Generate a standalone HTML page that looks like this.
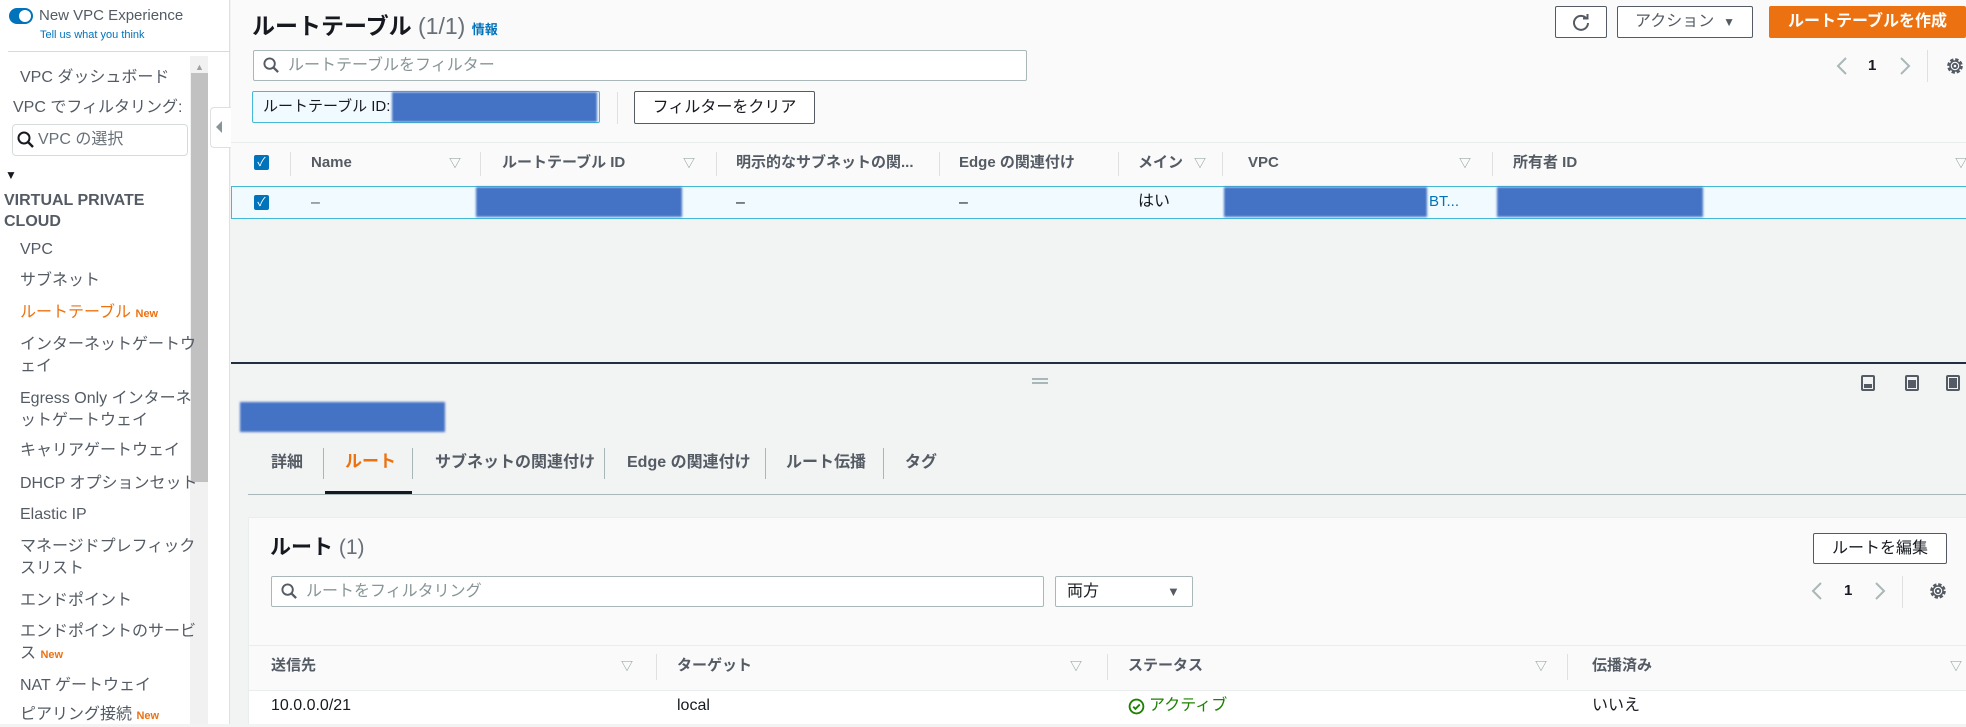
<!DOCTYPE html>
<html><head><meta charset="utf-8">
<style>
*{box-sizing:border-box;margin:0;padding:0}
body{width:1966px;height:724px;overflow:hidden;background:#f2f3f3;font-family:"Liberation Sans","Noto Sans CJK JP",sans-serif;font-size:16px;color:#16191f;position:relative}
.a{position:absolute;white-space:nowrap;line-height:22px}
.side{position:absolute;left:0;top:0;width:230px;height:724px;background:#fff;border-right:1px solid #e0e0e0}
.si{position:absolute;left:20px;color:#545b64;font-size:16px;line-height:22px;white-space:nowrap}
.blue{background:#4472c4;filter:blur(1px);position:absolute}
.btn{position:absolute;border:1px solid #545b64;border-radius:2px;background:#fff;font-size:16px;color:#16191f;display:flex;align-items:center;justify-content:center;line-height:20px}
.hd{font-weight:bold;color:#545b64;font-size:15px}
.tri{color:#879596;font-size:12px}
.sep{position:absolute;width:1px;background:#e0e0e0}
.inp{position:absolute;border:1px solid #aab7b8;background:#fff;border-radius:2px}
.ph{color:#879596}
</style></head><body>
<div class="side">
  <div class="a" style="left:9px;top:8px;width:24px;height:16px;border-radius:8px;background:#0073bb"></div>
  <div class="a" style="left:19px;top:10px;width:12px;height:12px;border-radius:6px;background:#fff"></div>
  <div class="a" style="left:39px;top:5px;font-size:15px;color:#545b64">New VPC Experience</div>
  <div class="a" style="left:40px;top:24px;font-size:11px;color:#0073bb">Tell us what you think</div>
  <div class="a" style="left:8px;top:51px;width:222px;height:1px;background:#d5dbdb"></div>
  <div class="a" style="left:190px;top:56px;width:18px;height:668px;background:#f1f1f1"></div>
  <div class="a" style="left:191px;top:73px;width:17px;height:409px;background:#c1c1c1"></div>
  <div class="a" style="left:195px;top:56px;font-size:9px;color:#a0a0a0">▲</div>
  <div class="si" style="top:67px">VPC ダッシュボード</div>
  <div class="si" style="top:97px;left:13px">VPC でフィルタリング:</div>
  <div class="inp" style="left:12px;top:124px;width:176px;height:32px;border-color:#d5dbdb;border-radius:4px"></div>
  <svg class="a" style="left:17px;top:131px" width="18" height="18" viewBox="0 0 18 18"><circle cx="7" cy="7" r="5.5" fill="none" stroke="#16191f" stroke-width="2"/><path d="M11 11l5 5" stroke="#16191f" stroke-width="2.4"/></svg>
  <div class="si" style="top:129px;left:38px;color:#687078">VPC の選択</div>
  <div class="a" style="left:5px;top:164px;font-size:12px;color:#16191f">▼</div>
  <div class="a" style="left:4px;top:190px;font-size:16px;font-weight:bold;color:#545b64;line-height:21px">VIRTUAL PRIVATE<br>CLOUD</div>
  <div class="si" style="top:239px">VPC</div>
  <div class="si" style="top:270px">サブネット</div>
  <div class="si" style="top:302px;color:#ec7211">ルートテーブル <b style="font-size:11px">New</b></div>
  <div class="si" style="top:334px">インターネットゲートウ<br>ェイ</div>
  <div class="si" style="top:388px">Egress Only インターネ<br>ットゲートウェイ</div>
  <div class="si" style="top:440px">キャリアゲートウェイ</div>
  <div class="si" style="top:473px">DHCP オプションセット</div>
  <div class="si" style="top:504px">Elastic IP</div>
  <div class="si" style="top:536px">マネージドプレフィック<br>スリスト</div>
  <div class="si" style="top:590px">エンドポイント</div>
  <div class="si" style="top:621px">エンドポイントのサービ<br>ス <b style="font-size:11px;color:#ec7211">New</b></div>
  <div class="si" style="top:675px">NAT ゲートウェイ</div>
  <div class="si" style="top:704px">ピアリング接続 <b style="font-size:11px;color:#ec7211">New</b></div>
</div>
<div class="a" style="left:210px;top:107px;width:21px;height:41px;background:#fff;border:1px solid #e0e0e0;border-right:none;border-radius:4px 0 0 4px"></div>
<div class="a" style="left:216px;top:121px;width:0;height:0;border-top:6px solid transparent;border-bottom:6px solid transparent;border-right:6px solid #879596"></div>

<!-- top panel -->
<div class="a" style="left:231px;top:0;width:1735px;height:143px;background:#fafafa;border-bottom:1px solid #eaeded"></div>
<div class="a" style="left:252px;top:12px;font-size:23px;line-height:28px;font-weight:bold;color:#16191f">ルートテーブル <span style="font-weight:normal;color:#687078">(1/1)</span> <span style="font-size:13px;color:#0073bb;font-weight:bold">情報</span></div>
<div class="btn" style="left:1555px;top:6px;width:52px;height:32px"><svg width="20" height="20" viewBox="0 0 20 20"><path d="M15.5 6.5A7 7 0 1 0 17 11" fill="none" stroke="#545b64" stroke-width="2"/><path d="M12 6.5h4.5V2" fill="none" stroke="#545b64" stroke-width="2"/></svg></div>
<div class="btn" style="left:1617px;top:6px;width:136px;height:32px;color:#545b64">アクション&nbsp;&nbsp;<span style="font-size:12px">▼</span></div>
<div class="a" style="left:1769px;top:6px;width:197px;height:32px;background:#ec7211;border-radius:2px;color:#fff;font-weight:bold;font-size:16px;display:flex;align-items:center;justify-content:center">ルートテーブルを作成</div>
<div class="inp" style="left:253px;top:50px;width:774px;height:31px"></div>
<svg class="a" style="left:263px;top:57px" width="17" height="17" viewBox="0 0 18 18"><circle cx="7" cy="7" r="5.5" fill="none" stroke="#545b64" stroke-width="2"/><path d="M11 11l5 5" stroke="#545b64" stroke-width="2.4"/></svg>
<div class="a ph" style="left:288px;top:55px">ルートテーブルをフィルター</div>
<svg class="a" style="left:1835px;top:56px" width="14" height="20" viewBox="0 0 14 20"><path d="M11 2L3 10l8 8" fill="none" stroke="#aab7b8" stroke-width="2"/></svg>
<div class="a" style="left:1868px;top:55px;font-weight:bold;font-size:15px">1</div>
<svg class="a" style="left:1898px;top:56px" width="14" height="20" viewBox="0 0 14 20"><path d="M3 2l8 8-8 8" fill="none" stroke="#aab7b8" stroke-width="2"/></svg>
<div class="sep" style="left:1927px;top:50px;height:32px"></div>
<svg class="a" style="left:1945px;top:56px" width="20" height="20" viewBox="0 0 20 20"><circle cx="10" cy="10" r="6.3" fill="none" stroke="#545b64" stroke-width="3" stroke-dasharray="3.2 1.75"/><circle cx="10" cy="10" r="5" fill="none" stroke="#545b64" stroke-width="1.5"/><circle cx="10" cy="10" r="2.2" fill="none" stroke="#545b64" stroke-width="1.8"/></svg>
<div class="a" style="left:252px;top:91px;width:348px;height:32px;background:#f1faff;border:1px solid #44b9d6;border-radius:2px"></div>
<div class="a" style="left:263px;top:96px;font-size:15px">ルートテーブル ID:</div>
<div class="blue" style="left:392px;top:92px;width:205px;height:30px"></div>
<div class="sep" style="left:617px;top:92px;height:32px"></div>
<div class="btn" style="left:634px;top:91px;width:181px;height:33px">フィルターをクリア</div>

<!-- table header -->
<div class="a" style="left:231px;top:143px;width:1735px;height:43px;background:#fafafa"></div>
<div class="a" style="left:254px;top:155px;width:15px;height:15px;background:#0073bb;border-radius:2px;color:#fff;font-size:12px;line-height:15px;text-align:center">✓</div>
<div class="sep" style="left:290px;top:152px;height:24px"></div>
<div class="a hd" style="left:311px;top:152px">Name</div><div class="a tri" style="left:449px;top:152px">▽</div>
<div class="sep" style="left:480px;top:152px;height:24px"></div>
<div class="a hd" style="left:502px;top:152px">ルートテーブル ID</div><div class="a tri" style="left:683px;top:152px">▽</div>
<div class="sep" style="left:716px;top:152px;height:24px"></div>
<div class="a hd" style="left:736px;top:152px">明示的なサブネットの関...</div>
<div class="sep" style="left:939px;top:152px;height:24px"></div>
<div class="a hd" style="left:959px;top:152px">Edge の関連付け</div>
<div class="sep" style="left:1118px;top:152px;height:24px"></div>
<div class="a hd" style="left:1138px;top:152px">メイン</div><div class="a tri" style="left:1194px;top:152px">▽</div>
<div class="sep" style="left:1222px;top:152px;height:24px"></div>
<div class="a hd" style="left:1248px;top:152px">VPC</div><div class="a tri" style="left:1459px;top:152px">▽</div>
<div class="sep" style="left:1492px;top:152px;height:24px"></div>
<div class="a hd" style="left:1513px;top:152px">所有者 ID</div><div class="a tri" style="left:1955px;top:152px">▽</div>
<!-- selected row -->
<div class="a" style="left:231px;top:186px;width:1735px;height:33px;background:#f1faff;border-top:1px solid #44b9d6;border-bottom:1px solid #44b9d6;border-left:1px solid #44b9d6"></div>
<div class="a" style="left:254px;top:195px;width:15px;height:15px;background:#0073bb;border-radius:2px;color:#fff;font-size:12px;line-height:15px;text-align:center">✓</div>
<div class="a" style="left:311px;top:192px;color:#545b64">–</div>
<div class="blue" style="left:476px;top:187px;width:206px;height:30px"></div>
<div class="a" style="left:736px;top:192px">–</div>
<div class="a" style="left:959px;top:192px">–</div>
<div class="a" style="left:1138px;top:191px;color:#16191f">はい</div>
<div class="blue" style="left:1224px;top:187px;width:203px;height:30px"></div>
<div class="a" style="left:1429px;top:191px;color:#0073bb;font-size:15px">BT...</div>
<div class="blue" style="left:1497px;top:187px;width:206px;height:30px"></div>

<!-- split -->
<div class="a" style="left:231px;top:362px;width:1735px;height:2px;background:#232f3e"></div>
<div class="a" style="left:1032px;top:378px;width:16px;height:2px;background:#aab7b8"></div>
<div class="a" style="left:1032px;top:382px;width:16px;height:2px;background:#aab7b8"></div>
<div class="a" style="left:1861px;top:375px;width:14px;height:16px;border:2px solid #545b64;border-radius:2px"><div style="position:absolute;left:1px;right:1px;bottom:1px;height:4px;background:#545b64"></div></div>
<div class="a" style="left:1905px;top:375px;width:14px;height:16px;border:2px solid #545b64;border-radius:2px"><div style="position:absolute;left:1px;right:1px;bottom:1px;height:8px;background:#545b64"></div></div>
<div class="a" style="left:1946px;top:375px;width:14px;height:16px;border:2px solid #545b64;border-radius:2px"><div style="position:absolute;left:1px;right:1px;bottom:1px;top:1px;background:#545b64"></div></div>
<div class="blue" style="left:240px;top:402px;width:205px;height:30px"></div>

<!-- tabs -->
<div class="a" style="left:248px;top:494px;width:1718px;height:1px;background:#aab7b8"></div>
<div class="a hd" style="left:271px;top:452px;font-size:16px">詳細</div>
<div class="sep" style="left:323px;top:448px;height:31px;background:#aab7b8"></div>
<div class="a" style="left:345px;top:451px;font-size:17px;font-weight:bold;color:#ec7211">ルート</div>
<div class="a" style="left:325px;top:491px;width:87px;height:3px;background:#16191f"></div>
<div class="sep" style="left:412px;top:448px;height:31px;background:#aab7b8"></div>
<div class="a hd" style="left:435px;top:452px;font-size:16px">サブネットの関連付け</div>
<div class="sep" style="left:604px;top:448px;height:31px;background:#aab7b8"></div>
<div class="a hd" style="left:627px;top:452px;font-size:16px">Edge の関連付け</div>
<div class="sep" style="left:765px;top:448px;height:31px;background:#aab7b8"></div>
<div class="a hd" style="left:786px;top:452px;font-size:16px">ルート伝播</div>
<div class="sep" style="left:883px;top:448px;height:31px;background:#aab7b8"></div>
<div class="a hd" style="left:905px;top:452px;font-size:16px">タグ</div>

<!-- routes panel -->
<div class="a" style="left:248px;top:517px;width:1718px;height:207px;background:#fafafa;border-left:1px solid #eaeded;border-top:1px solid #eaeded"></div>
<div class="a" style="left:270px;top:535px;font-size:21px;line-height:26px;font-weight:bold">ルート <span style="font-weight:normal;color:#687078">(1)</span></div>
<div class="btn" style="left:1813px;top:533px;width:134px;height:31px">ルートを編集</div>
<div class="inp" style="left:271px;top:576px;width:773px;height:31px"></div>
<svg class="a" style="left:281px;top:583px" width="17" height="17" viewBox="0 0 18 18"><circle cx="7" cy="7" r="5.5" fill="none" stroke="#545b64" stroke-width="2"/><path d="M11 11l5 5" stroke="#545b64" stroke-width="2.4"/></svg>
<div class="a ph" style="left:306px;top:581px">ルートをフィルタリング</div>
<div class="inp" style="left:1055px;top:576px;width:138px;height:31px"></div>
<div class="a" style="left:1067px;top:581px;color:#16191f">両方</div>
<div class="a" style="left:1167px;top:581px;font-size:13px;color:#545b64">▼</div>
<svg class="a" style="left:1810px;top:581px" width="14" height="20" viewBox="0 0 14 20"><path d="M11 2L3 10l8 8" fill="none" stroke="#aab7b8" stroke-width="2"/></svg>
<div class="a" style="left:1844px;top:580px;font-weight:bold;font-size:15px">1</div>
<svg class="a" style="left:1873px;top:581px" width="14" height="20" viewBox="0 0 14 20"><path d="M3 2l8 8-8 8" fill="none" stroke="#aab7b8" stroke-width="2"/></svg>
<div class="sep" style="left:1902px;top:576px;height:32px"></div>
<svg class="a" style="left:1928px;top:581px" width="20" height="20" viewBox="0 0 20 20"><circle cx="10" cy="10" r="6.3" fill="none" stroke="#545b64" stroke-width="3" stroke-dasharray="3.2 1.75"/><circle cx="10" cy="10" r="5" fill="none" stroke="#545b64" stroke-width="1.5"/><circle cx="10" cy="10" r="2.2" fill="none" stroke="#545b64" stroke-width="1.8"/></svg>
<div class="a" style="left:249px;top:645px;width:1717px;height:1px;background:#eaeded"></div>
<div class="a hd" style="left:271px;top:655px">送信先</div><div class="a tri" style="left:621px;top:655px">▽</div>
<div class="sep" style="left:656px;top:654px;height:26px"></div>
<div class="a hd" style="left:677px;top:655px">ターゲット</div><div class="a tri" style="left:1070px;top:655px">▽</div>
<div class="sep" style="left:1107px;top:654px;height:26px"></div>
<div class="a hd" style="left:1128px;top:655px">ステータス</div><div class="a tri" style="left:1535px;top:655px">▽</div>
<div class="sep" style="left:1567px;top:654px;height:26px"></div>
<div class="a hd" style="left:1592px;top:655px">伝播済み</div><div class="a tri" style="left:1950px;top:655px">▽</div>
<div class="a" style="left:249px;top:690px;width:1717px;height:34px;background:#fff;border-top:1px solid #eaeded"></div>
<div class="a" style="left:271px;top:695px;color:#16191f">10.0.0.0/21</div>
<div class="a" style="left:677px;top:695px">local</div>
<svg class="a" style="left:1128px;top:698px" width="17" height="17" viewBox="0 0 18 18"><circle cx="9" cy="9" r="7.3" fill="none" stroke="#1d8102" stroke-width="2"/><path d="M5.5 9.2l2.4 2.4 4.6-4.8" fill="none" stroke="#1d8102" stroke-width="2"/></svg>
<div class="a" style="left:1149px;top:695px;color:#1d8102">アクティブ</div>
<div class="a" style="left:1592px;top:695px;color:#16191f">いいえ</div>
</body></html>
